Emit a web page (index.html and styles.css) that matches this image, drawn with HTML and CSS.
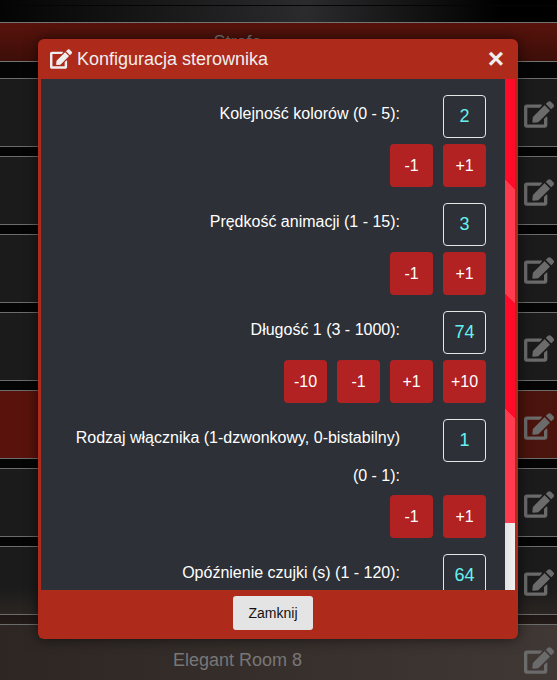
FILE: index.html
```html
<!DOCTYPE html>
<html lang="en">
<head>
    <meta charset="UTF-8">
    <meta name="viewport" content="width=device-width, initial-scale=1.0">
    <title>Konfiguracja sterownika</title>
    <link rel="stylesheet" href="styles.css">
</head>
<body>

    <svg class="icon-defs" width="0" height="0">
        <symbol id="icon-edit" viewBox="0 0 576 512">
            <path d="M402.6 83.2l90.2 90.2c3.8 3.8 3.8 10 0 13.8L274.4 405.6l-92.8 10.3c-12.4 1.4-22.9-9.1-21.5-21.5l10.3-92.8L388.8 83.2c3.8-3.8 10-3.8 13.8 0zm162-22.9l-48.8-48.8c-15.2-15.2-39.9-15.2-55.2 0l-35.4 35.4c-3.8 3.8-3.8 10 0 13.8l90.2 90.2c3.8 3.8 10 3.8 13.8 0l35.4-35.4c15.2-15.3 15.2-40 0-55.2zM384 346.2V448H64V128h229.8c3.2 0 6.2-1.3 8.5-3.5l40-40c7.6-7.6 2.2-20.5-8.5-20.5H48C21.5 64 0 85.5 0 112v352c0 26.5 21.5 48 48 48h352c26.5 0 48-21.5 48-48V306.2c0-10.7-12.9-16-20.5-8.5l-40 40c-2.2 2.3-3.5 5.3-3.5 8.5z"/>
        </symbol>
    </svg>

    <!-- Page behind the dialog -->
    <div class="page">
        <div class="topbar"></div>
        <div class="zone-row"><span class="room-name">Strefa</span></div>
        <div class="room-list">
            <div class="room"><svg class="room-edit"><use href="#icon-edit"/></svg></div>
            <div class="room"><svg class="room-edit"><use href="#icon-edit"/></svg></div>
            <div class="room"><svg class="room-edit"><use href="#icon-edit"/></svg></div>
            <div class="room"><svg class="room-edit"><use href="#icon-edit"/></svg></div>
            <div class="room room-active"><svg class="room-edit"><use href="#icon-edit"/></svg></div>
            <div class="room"><svg class="room-edit"><use href="#icon-edit"/></svg></div>
            <div class="room room-fade"><svg class="room-edit"><use href="#icon-edit"/></svg></div>
            <div class="room room-last"><span class="room-name">Elegant Room 8</span><svg class="room-edit"><use href="#icon-edit"/></svg></div>
        </div>
    </div>

    <!-- Dialog -->
    <div class="modal">
        <div class="modal-header">
            <svg class="header-icon"><use href="#icon-edit"/></svg>
            <h4 class="modal-title">Konfiguracja sterownika</h4>
            <span class="close-btn">×</span>
        </div>

        <div class="modal-middle">
            <div class="modal-body">
                <div class="field">
                    <div class="field-top">
                        <label class="field-label">Kolejność kolorów (0 - 5):</label>
                        <div class="field-value">2</div>
                    </div>
                    <div class="field-buttons">
                        <button class="step-btn">-1</button>
                        <button class="step-btn">+1</button>
                    </div>
                </div>

                <div class="field">
                    <div class="field-top">
                        <label class="field-label">Prędkość animacji (1 - 15):</label>
                        <div class="field-value">3</div>
                    </div>
                    <div class="field-buttons">
                        <button class="step-btn">-1</button>
                        <button class="step-btn">+1</button>
                    </div>
                </div>

                <div class="field">
                    <div class="field-top">
                        <label class="field-label">Długość 1 (3 - 1000):</label>
                        <div class="field-value">74</div>
                    </div>
                    <div class="field-buttons">
                        <button class="step-btn">-10</button>
                        <button class="step-btn">-1</button>
                        <button class="step-btn">+1</button>
                        <button class="step-btn">+10</button>
                    </div>
                </div>

                <div class="field">
                    <div class="field-top">
                        <label class="field-label">Rodzaj włącznika (1-dzwonkowy, 0-bistabilny) (0 - 1):</label>
                        <div class="field-value">1</div>
                    </div>
                    <div class="field-buttons">
                        <button class="step-btn">-1</button>
                        <button class="step-btn">+1</button>
                    </div>
                </div>

                <div class="field">
                    <div class="field-top">
                        <label class="field-label">Opóźnienie czujki (s) (1 - 120):</label>
                        <div class="field-value">64</div>
                    </div>
                </div>
            </div>

            <div class="scrollbar"><div class="scrollbar-thumb"></div></div>
        </div>

        <div class="modal-footer">
            <button class="close-footer">Zamknij</button>
        </div>
    </div>

</body>
</html>
```

FILE: styles.css
```css
/* General styles */
html, body {
    height: 100%;
    overflow: hidden;
}

body {
    margin: 0;
    font-family: "Liberation Sans", Arial, sans-serif;
    background: #050505;
    color: #fff;
}

.icon-defs {
    position: absolute;
}

/* Page behind the dialog */
.page {
    height: 680px;
    overflow: hidden;
    background: linear-gradient(#050505 85%, #241c19 92%, #2f2825);
}

.topbar {
    height: 22px;
    background:
        linear-gradient(#0000 5px, #050505 5px, #050505 6px, #0000 6px),
        linear-gradient(90deg, #040404, #2b2b2d 55%, #000 90%);
}

.zone-row {
    height: 38px;
    display: flex;
    align-items: center;
    padding-right: 82px;
    justify-content: center;
    border-top: 1px solid #747474;
    border-bottom: 1px solid #747474;
    background: linear-gradient(#58130c, #3d0e08);
    margin-bottom: 16px;
}

.room-name {
    font-size: 18px;
    color: #777;
}

.room-list {
    display: flex;
    flex-direction: column;
    gap: 9px;
}

.room {
    position: relative;
    height: 67px;
    flex-shrink: 0;
    display: flex;
    align-items: center;
    justify-content: center;
    padding-right: 82px;
    border-top: 1px solid #6c6c6c;
    border-bottom: 1px solid #6c6c6c;
    background: #1b1b1b;
}

.room-active {
    background: linear-gradient(90deg, #5a130c, #4f110b 60%, #4a140d);
}

.room-fade {
    background: linear-gradient(#1b1b1b, #1b1b1b 60%, #2a2522);
}

.room-last {
    background: linear-gradient(90deg, #2d2623, #403835);
}

.room-last .room-name {
    margin-top: 3px;
}

.room-edit {
    position: absolute;
    right: 3px;
    top: 22px;
    width: 30px;
    height: 27px;
    fill: #6b6b6b;
}

/* Dialog */
.modal {
    position: absolute;
    left: 38px;
    top: 39px;
    width: 480px;
    height: 600px;
    display: flex;
    flex-direction: column;
    border-radius: 6px;
    overflow: hidden;
    background: #ae2a1b;
    box-shadow: 0 0 14px rgba(0, 0, 0, 0.6);
}

.modal-header {
    height: 40px;
    flex-shrink: 0;
    display: flex;
    align-items: center;
    padding: 0 14px 0 12px;
    color: #eee;
}

.header-icon {
    width: 22px;
    height: 20px;
    margin-right: 5px;
    fill: #eee;
}

.modal-title {
    margin: 0;
    flex: 1;
    font-size: 18px;
    font-weight: normal;
}

.close-btn {
    font-size: 28px;
    font-weight: bold;
    line-height: 28px;
}

.modal-middle {
    flex: 1;
    min-height: 0;
    display: flex;
    margin: 0 3px;
}

.modal-body {
    flex: 1;
    min-width: 0;
    overflow: hidden;
    padding: 16px 19px 0 0;
    background: #2d3036;
}

.field {
    margin-bottom: 16px;
}

.field-top {
    display: flex;
    justify-content: flex-end;
    align-items: flex-start;
}

.field-label {
    width: 330px;
    margin-right: 43px;
    text-align: right;
    font-size: 16px;
    line-height: 38px;
}

.field-value {
    width: 41px;
    height: 41px;
    flex-shrink: 0;
    margin-bottom: 6px;
    display: flex;
    align-items: center;
    justify-content: center;
    border: 1px solid #e6e6e6;
    border-radius: 4px;
    font-size: 18px;
    color: #66f2f2;
}

.field-buttons {
    display: flex;
    justify-content: flex-end;
    gap: 10px;
}

.step-btn {
    width: 43px;
    height: 43px;
    padding: 0;
    border: none;
    border-radius: 4px;
    background: #b22222;
    color: #fff;
    font-family: inherit;
    font-size: 16px;
}

/* Hand-drawn scrollbar */
.scrollbar {
    width: 10px;
    flex-shrink: 0;
    background: linear-gradient(90deg, #e2e2e2, #f1f1f1);
}

.scrollbar-thumb {
    height: 444px;
    background: repeating-linear-gradient(45deg, #ff3b50 0 81px, #ff0a28 81px 162px);
}

.modal-footer {
    height: 49px;
    flex-shrink: 0;
    display: flex;
    justify-content: center;
    padding: 6px 10px 0 0;
    box-sizing: border-box;
}

.close-footer {
    width: 80px;
    height: 34px;
    padding: 0;
    border: none;
    border-radius: 3px;
    background: #e4e4e4;
    color: #111;
    font-family: inherit;
    font-size: 14px;
}
```
